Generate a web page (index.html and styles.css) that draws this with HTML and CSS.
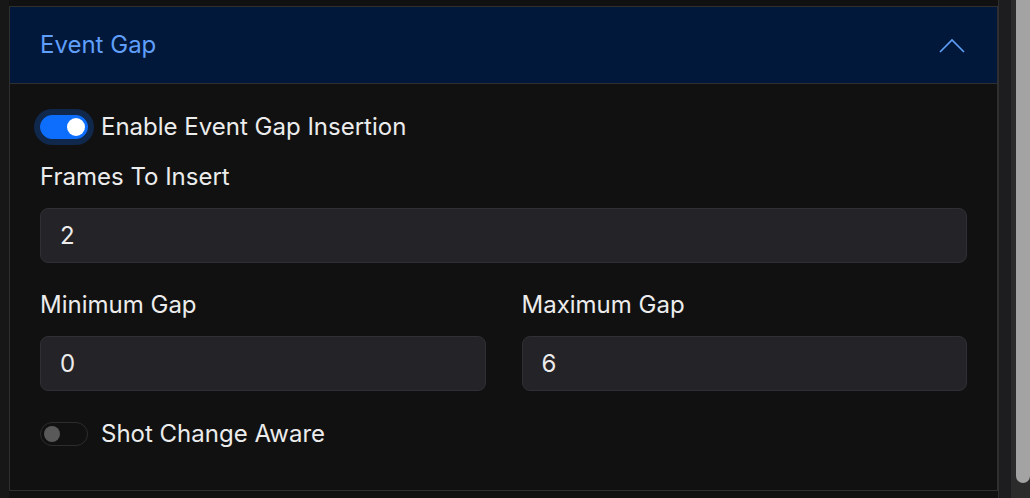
FILE: index.html
```html
<!DOCTYPE html>
<html lang="en">
<head>
<meta charset="utf-8" />
<title>Event Gap settings</title>
<link rel="stylesheet" href="styles.css">
</head>
<body>
	<div class="page">
		<div class="edge"></div>

		<div class="panel">
			<div class="acc-item">
				<div class="acc-header">
					<span class="acc-title">Event Gap</span>
					<svg class="chevron" width="26" height="15" viewBox="0 0 26 15">
						<polyline points="1,14 13,2 25,14" fill="none" stroke="#5f9ffb" stroke-width="1.6" />
					</svg>
				</div>

				<div class="acc-body">
					<label class="switch-row">
						<span class="switch on"><span class="knob"></span></span>
						<span class="switch-label">Enable Event Gap Insertion</span>
					</label>

					<div class="field">
						<div class="field-label">Frames To Insert</div>
						<div class="input">2</div>
					</div>

					<div class="field-row">
						<div class="field">
							<div class="field-label">Minimum Gap</div>
							<div class="input">0</div>
						</div>
						<div class="field">
							<div class="field-label">Maximum Gap</div>
							<div class="input">6</div>
						</div>
					</div>

					<label class="switch-row last">
						<span class="switch"><span class="knob"></span></span>
						<span class="switch-label">Shot Change Aware</span>
					</label>
				</div>
			</div>
		</div>

		<div class="gutter"></div>
		<div class="scrollbar"><div class="thumb"></div></div>
	</div>
</body>
</html>
```

FILE: styles.css
```css
html, body { height: 100%; }

body {
	margin: 0;
	padding: 0;
	background: #111111;
	color: #ececec;
	font-family: Inter, "Noto Sans", sans-serif;
	font-size: 24px;
	overflow: hidden;
}

.page {
	display: flex;
	height: 100%;
}

.edge {
	width: 9px;
	background: #171717;
	flex: none;
}

.panel {
	flex: 1;
	padding-top: 6px;
	min-width: 0;
}

.acc-item {
	border: 1px solid #2f2f2f;
	background: #111111;
}

.acc-header {
	display: flex;
	align-items: center;
	justify-content: space-between;
	height: 77px;
	padding: 0 32px 0 30px;
	background: #02183a;
	border-bottom: 1px solid #2f2f2f;
	box-sizing: border-box;
}

.acc-title {
	color: #5f9ffb;
	font-size: 24px;
	line-height: 30px;
}

.chevron {
	display: block;
	margin-top: 1px;
}

.acc-body {
	padding: 31px 30px 44px 30px;
}

.switch-row {
	display: flex;
	align-items: center;
	gap: 13px;
	height: 24px;
	margin-bottom: 23px;
}

.switch-row.last {
	margin-top: 31px;
	margin-bottom: 0;
}

.switch {
	position: relative;
	width: 48px;
	height: 24px;
	border-radius: 12px;
	border: 1px solid #2d2d2d;
	box-sizing: border-box;
	flex: none;
}

.switch .knob {
	position: absolute;
	top: 3px;
	left: 3px;
	width: 16px;
	height: 16px;
	border-radius: 50%;
	background: #595959;
}

.switch.on {
	background: #0d6efd;
	border-color: #0d6efd;
	box-shadow: 0 0 0 6px #10284c;
}

.switch.on .knob {
	left: auto;
	right: 2px;
	top: 2px;
	width: 18px;
	height: 18px;
	background: #ffffff;
}

.switch-label {
	line-height: 24px;
}

.field-label {
	line-height: 30px;
	margin-bottom: 16px;
}

.input {
	height: 55px;
	box-sizing: border-box;
	background: #232328;
	border: 1px solid #2f2f35;
	border-radius: 8px;
	padding: 0 19px;
	display: flex;
	align-items: center;
	color: #ececec;
}

.field-row {
	display: grid;
	grid-template-columns: 1fr 1fr;
	column-gap: 36px;
	margin-top: 27px;
}

.gutter {
	width: 12px;
	background: #1d1d1f;
	border-left: 1px solid #2f2f2f;
	flex: none;
}

.scrollbar {
	width: 19px;
	background: #2b2b2b;
	flex: none;
	display: flex;
	justify-content: flex-end;
}

.thumb {
	width: 14px;
	height: 483px;
	background: #a3a3a3;
	border-radius: 0 0 7px 7px;
}
```
